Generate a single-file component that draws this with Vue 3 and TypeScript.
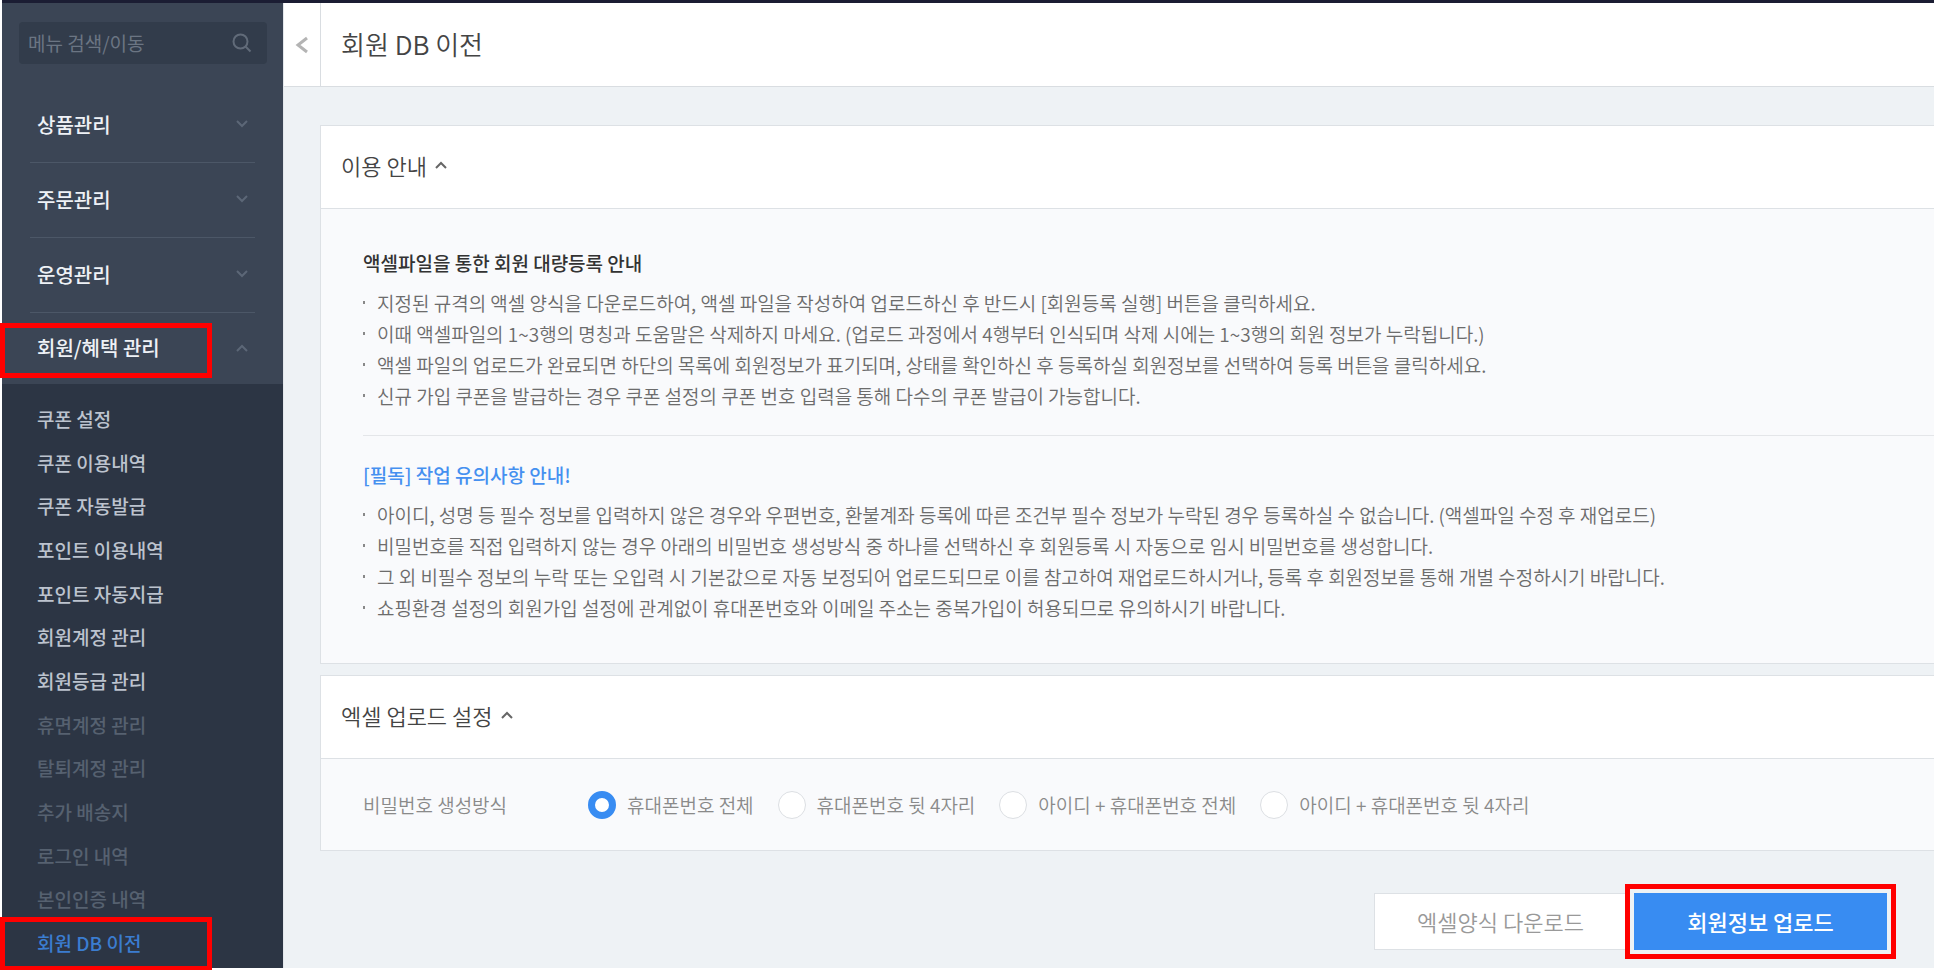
<script setup lang="ts">
import { ref } from 'vue'

interface SubItem {
  label: string
  state: 'normal' | 'dim' | 'current'
}

const keyword = ref('')
const passwordRule = ref(0)

const menus: string[] = ['상품관리', '주문관리', '운영관리']

const subItems: SubItem[] = [
  { label: '쿠폰 설정', state: 'normal' },
  { label: '쿠폰 이용내역', state: 'normal' },
  { label: '쿠폰 자동발급', state: 'normal' },
  { label: '포인트 이용내역', state: 'normal' },
  { label: '포인트 자동지급', state: 'normal' },
  { label: '회원계정 관리', state: 'normal' },
  { label: '회원등급 관리', state: 'normal' },
  { label: '휴면계정 관리', state: 'dim' },
  { label: '탈퇴계정 관리', state: 'dim' },
  { label: '추가 배송지', state: 'dim' },
  { label: '로그인 내역', state: 'dim' },
  { label: '본인인증 내역', state: 'dim' },
  { label: '회원 DB 이전', state: 'current' },
]

const guide: string[] = [
  '지정된 규격의 액셀 양식을 다운로드하여, 액셀 파일을 작성하여 업로드하신 후 반드시 [회원등록 실행] 버튼을 클릭하세요.',
  '이때 액셀파일의 1~3행의 명칭과 도움말은 삭제하지 마세요. (업로드 과정에서 4행부터 인식되며 삭제 시에는 1~3행의 회원 정보가 누락됩니다.)',
  '액셀 파일의 업로드가 완료되면 하단의 목록에 회원정보가 표기되며, 상태를 확인하신 후 등록하실 회원정보를 선택하여 등록 버튼을 클릭하세요.',
  '신규 가입 쿠폰을 발급하는 경우 쿠폰 설정의 쿠폰 번호 입력을 통해 다수의 쿠폰 발급이 가능합니다.',
]

const cautions: string[] = [
  '아이디, 성명 등 필수 정보를 입력하지 않은 경우와 우편번호, 환불계좌 등록에 따른 조건부 필수 정보가 누락된 경우 등록하실 수 없습니다. (액셀파일 수정 후 재업로드)',
  '비밀번호를 직접 입력하지 않는 경우 아래의 비밀번호 생성방식 중 하나를 선택하신 후 회원등록 시 자동으로 임시 비밀번호를 생성합니다.',
  '그 외 비필수 정보의 누락 또는 오입력 시 기본값으로 자동 보정되어 업로드되므로 이를 참고하여 재업로드하시거나, 등록 후 회원정보를 통해 개별 수정하시기 바랍니다.',
  '쇼핑환경 설정의 회원가입 설정에 관계없이 휴대폰번호와 이메일 주소는 중복가입이 허용되므로 유의하시기 바랍니다.',
]

const rules: string[] = [
  '휴대폰번호 전체',
  '휴대폰번호 뒷 4자리',
  '아이디 + 휴대폰번호 전체',
  '아이디 + 휴대폰번호 뒷 4자리',
]
</script>

<template>
  <div class="page">
    <div class="topbar"></div>
    <div class="layout">
      <aside class="sidebar">
        <form class="search" role="search" @submit.prevent>
          <input v-model="keyword" type="text" placeholder="메뉴 검색/이동" aria-label="메뉴 검색/이동" />
          <button type="submit" aria-label="검색">
            <svg width="20" height="20" viewBox="0 0 20 20">
              <circle cx="8.5" cy="8.5" r="7" />
              <path d="M13.5 13.5 L18.5 18.5" />
            </svg>
          </button>
        </form>

        <nav class="nav">
          <button v-for="menu in menus" :key="menu" class="menu" type="button">
            <span>{{ menu }}</span>
            <svg class="chevron" width="12" height="8" viewBox="0 0 12 8"><path d="M1 1 L6 6 L11 1" /></svg>
          </button>
          <button class="menu open" type="button" aria-expanded="true">
            <span>회원/혜택 관리</span>
            <svg class="chevron" width="12" height="8" viewBox="0 0 12 8"><path d="M1 7 L6 2 L11 7" /></svg>
            <i class="mark"></i>
          </button>
        </nav>

        <ul class="sub">
          <li v-for="item in subItems" :key="item.label" :class="item.state">
            <a href="#">{{ item.label }}</a>
            <i v-if="item.state === 'current'" class="mark"></i>
          </li>
        </ul>
      </aside>

      <main class="main">
        <header class="header">
          <button class="back" type="button" aria-label="메뉴 접기">
            <svg width="14" height="20" viewBox="0 0 14 20"><path d="M12 3 L3 10 L12 17" /></svg>
          </button>
          <h1>회원 DB 이전</h1>
        </header>

        <div class="content">
          <section class="card">
            <h2>
              이용 안내
              <svg class="caret" width="12" height="8" viewBox="0 0 12 8"><path d="M1 7 L6 2 L11 7" /></svg>
            </h2>
            <div class="guide">
              <h3>액셀파일을 통한 회원 대량등록 안내</h3>
              <ul>
                <li v-for="line in guide" :key="line">{{ line }}</li>
              </ul>
              <hr />
              <h3 class="notice">[필독] 작업 유의사항 안내!</h3>
              <ul>
                <li v-for="line in cautions" :key="line">{{ line }}</li>
              </ul>
            </div>
          </section>

          <section class="card">
            <h2>
              엑셀 업로드 설정
              <svg class="caret" width="12" height="8" viewBox="0 0 12 8"><path d="M1 7 L6 2 L11 7" /></svg>
            </h2>
            <div class="setting" role="radiogroup" aria-labelledby="rule-label">
              <span id="rule-label" class="name">비밀번호 생성방식</span>
              <div class="options">
                <label v-for="(rule, i) in rules" :key="rule" :for="`rule-${i}`">
                  <input :id="`rule-${i}`" v-model="passwordRule" type="radio" name="rule" :value="i" />
                  <span>{{ rule }}</span>
                </label>
              </div>
            </div>
          </section>

          <div class="actions">
            <button class="button" type="button">엑셀양식 다운로드</button>
            <button class="button primary" type="button">회원정보 업로드<i class="mark"></i></button>
          </div>
        </div>
      </main>
    </div>
  </div>
</template>

<style>
body {
  background: #fff;
}
</style>

<style scoped>
* {
  box-sizing: border-box;
}

.page {
  padding: 0 0 3px 2px;
  font-family: 'Noto Sans CJK KR', sans-serif;
  font-size: 19px;
  overflow: hidden;
}

button,
input {
  font-family: inherit;
}

h1,
h2,
h3,
ul {
  margin: 0;
  padding: 0;
  font-weight: 350;
  list-style: none;
}

svg {
  fill: none;
  stroke: currentColor;
  stroke-width: 2;
}

.topbar {
  height: 3px;
  background: #1b1d33;
}

.layout {
  display: flex;
}

.sidebar {
  display: flex;
  flex: 0 0 281px;
  flex-direction: column;
  min-width: 0;
  background: #3b4555;
}

.search {
  display: flex;
  align-items: center;
  height: 42px;
  margin: 19px 16px 24px 17px;
  padding: 0 15px 0 9px;
  border-radius: 4px;
  background: #323c4b;
}

.search input {
  flex: 1;
  width: 0;
  min-width: 0;
  padding: 0 0 2px;
  border: 0;
  outline: 0;
  background: none;
  color: #747e8b;
  font-size: 19px;
}

.search input::placeholder {
  color: #6b7583;
  opacity: 1;
}

.search button {
  display: flex;
  padding: 0;
  border: 0;
  background: none;
  color: #616b79;
}

.nav {
  display: flex;
  flex-direction: column;
}

.menu {
  position: relative;
  display: flex;
  align-items: center;
  justify-content: space-between;
  height: 75px;
  margin: 0 28px;
  padding: 0 7px 2px;
  border: 0;
  border-bottom: 1px solid #4c5767;
  background: none;
  color: #eef1f6;
  font-size: 20px;
  font-weight: 500;
}

.menu.open {
  height: 71px;
  border-bottom: 0;
}

.chevron {
  color: #5c6777;
}

.mark {
  position: absolute;
  border: 5px solid #f00;
  pointer-events: none;
}

.menu .mark {
  top: 10px;
  left: -30px;
  width: 212px;
  height: 55px;
}

.sub {
  display: flex;
  flex: 1;
  flex-direction: column;
  padding: 13px 0 3px;
  background: #2c3544;
}

.sub li {
  position: relative;
  display: flex;
  flex: 1 0 43px;
  align-items: center;
  padding-left: 35px;
}

.sub a {
  color: #bcc3ce;
  font-weight: 500;
  line-height: 28px;
  text-decoration: none;
}

.sub .dim a {
  color: #566170;
}

.sub .current a {
  color: #3b7dd0;
}

.sub .mark {
  bottom: -6px;
  left: -2px;
  width: 212px;
  height: 54px;
}

.main {
  display: flex;
  flex: 1;
  flex-direction: column;
  min-width: 0;
  border-left: 1px solid #e3e7eb;
  background: #eef2f5;
}

.header {
  display: flex;
  height: 84px;
  border-bottom: 1px solid #d9dde1;
  background: #fff;
}

.back {
  display: flex;
  align-items: center;
  justify-content: center;
  width: 37px;
  padding: 0;
  border: 0;
  border-right: 1px solid #d9dde1;
  background: none;
  color: #b4b4b4;
  stroke-width: 3;
}

.back svg {
  stroke-width: 3;
}

h1 {
  padding-left: 20px;
  color: #444;
  font-size: 26px;
  line-height: 82px;
}

.content {
  padding: 38px 0 18px 36px;
}

.card {
  margin-bottom: 11px;
  border: 1px solid #dde1e5;
  border-right: 0;
  background: #f9fafc;
}

h2 {
  display: flex;
  align-items: center;
  gap: 8px;
  height: 83px;
  padding: 0 0 4px 20px;
  border-bottom: 1px solid #dde1e5;
  background: #fff;
  color: #444;
  font-size: 22px;
}

.caret {
  color: #666;
}

.guide {
  padding: 39px 0 40px 42px;
}

h3 {
  color: #333;
  font-size: 19px;
  font-weight: 500;
  line-height: 30px;
}

h3.notice {
  color: #4590f0;
}

.guide ul {
  margin-top: 9px;
}

.guide li {
  display: flex;
  align-items: center;
  gap: 12px;
  color: #6c6c6c;
  line-height: 31px;
  white-space: nowrap;
}

.guide li::before {
  width: 2px;
  height: 3px;
  background: #888;
  content: '';
}

.guide li,
.setting {
  font-weight: 350;
}

hr {
  height: 1px;
  margin: 24px 0;
  border: 0;
  background: #e4e6e9;
}

.setting {
  display: flex;
  align-items: center;
  height: 91px;
  padding-left: 42px;
  color: #8a8a8a;
}

.name {
  flex: 0 0 225px;
}

.options {
  display: flex;
  gap: 24px;
}

.options label {
  display: flex;
  align-items: center;
  gap: 11px;
}

.options input {
  width: 28px;
  height: 28px;
  margin: 0;
  border: 1px solid #dcdfe3;
  border-radius: 50%;
  background: #fff;
  appearance: none;
}

.options input:checked {
  border: 7px solid #388cf2;
}

.actions {
  display: flex;
  justify-content: flex-end;
  gap: 7px;
  margin-top: 42px;
  padding-right: 47px;
}

.button {
  position: relative;
  width: 253px;
  height: 57px;
  padding: 0 0 2px;
  border: 1px solid #dde1e5;
  background: #fff;
  color: #999;
  font-size: 22px;
  font-weight: 350;
}

.button.primary {
  border-color: #388cf2;
  background: #388cf2;
  color: #fff;
  font-weight: 500;
}

.button .mark {
  inset: -10px;
}
</style>
